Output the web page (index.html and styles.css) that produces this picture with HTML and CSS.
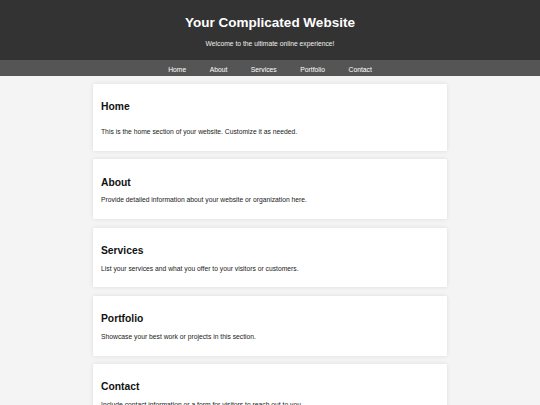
FILE: index.html
```html
<!DOCTYPE html>
<html lang="en">
<head>
<meta charset="utf-8">
<title>Your Complicated Website</title>
<link rel="stylesheet" href="styles.css">
</head>
<body>
<header class="site-header">
  <h1 class="site-title">Your Complicated Website</h1>
  <p class="site-tagline">Welcome to the ultimate online experience!</p>
</header>
<nav class="site-nav">
  <a href="#home">Home</a>
  <a href="#about">About</a>
  <a href="#services">Services</a>
  <a href="#portfolio">Portfolio</a>
  <a href="#contact">Contact</a>
</nav>
<main class="content">
  <section class="card card-home" id="home">
    <h2>Home</h2>
    <p>This is the home section of your website. Customize it as needed.</p>
  </section>
  <section class="card" id="about">
    <h2>About</h2>
    <p>Provide detailed information about your website or organization here.</p>
  </section>
  <section class="card" id="services">
    <h2>Services</h2>
    <p>List your services and what you offer to your visitors or customers.</p>
  </section>
  <section class="card" id="portfolio">
    <h2>Portfolio</h2>
    <p>Showcase your best work or projects in this section.</p>
  </section>
  <section class="card" id="contact">
    <h2>Contact</h2>
    <p>Include contact information or a form for visitors to reach out to you.</p>
  </section>
</main>
</body>
</html>
```
FILE: styles.css
```css
html, body {
  margin: 0;
  padding: 0;
}
body {
  background: #f4f4f4;
  font-family: "Liberation Sans", Arial, sans-serif;
  font-size: 6.75px;
  line-height: 8px;
  color: #333;
}
.site-header {
  background: #333;
  color: #fff;
  text-align: center;
  padding: 15.25px 0 11.5px;
  height: 60px;
  box-sizing: border-box;
}
.site-title {
  margin: 0;
  font-size: 13.5px;
  line-height: 15.5px;
  font-weight: bold;
}
.site-tagline {
  margin: 9.5px 0 0;
  font-size: 6.75px;
  line-height: 8px;
  color: #eee;
}
.site-nav {
  background: #555;
  display: flex;
  justify-content: center;
  gap: 23.5px;
  padding: 5.5px 0 2px;
  line-height: 8px;
}
.site-nav a {
  color: #fff;
  text-decoration: none;
  font-size: 6.75px;
}
.content {
  width: 354px;
  margin: 0 auto;
  padding-top: 8.5px;
  display: flex;
  flex-direction: column;
  gap: 8.5px;
}
.card {
  background: #fff;
  padding: 8px;
  box-shadow: 0 0 4px rgba(0, 0, 0, 0.1);
  border-radius: 1px;
}
.card h2 {
  margin: 9.25px 0 0;
  font-size: 10.3px;
  line-height: 12px;
  color: #111;
}
.card p {
  margin: 7.75px 0 6.75px;
  font-size: 6.75px;
  line-height: 8px;
  color: #222;
}
.card-home p {
  margin-top: 14.75px;
}
```
